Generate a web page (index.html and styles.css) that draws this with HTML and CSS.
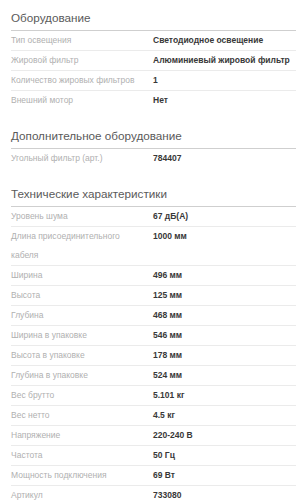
FILE: index.html
```html
<!DOCTYPE html>
<html lang="ru">
<head>
<meta charset="utf-8">
<title>Характеристики</title>
<link rel="stylesheet" href="styles.css">
</head>
<body>
<div class="specs">
  <section class="group">
    <h2 class="group-title">Оборудование</h2>
    <table class="spec-table">
      <tr><th>Тип освещения</th><td>Светодиодное освещение</td></tr>
      <tr><th>Жировой фильтр</th><td>Алюминиевый жировой фильтр</td></tr>
      <tr><th>Количество жировых фильтров</th><td>1</td></tr>
      <tr><th>Внешний мотор</th><td>Нет</td></tr>
    </table>
  </section>
  <section class="group">
    <h2 class="group-title">Дополнительное оборудование</h2>
    <table class="spec-table">
      <tr><th>Угольный фильтр (арт.)</th><td>784407</td></tr>
    </table>
  </section>
  <section class="group">
    <h2 class="group-title">Технические характеристики</h2>
    <table class="spec-table">
      <tr><th>Уровень шума</th><td>67 дБ(А)</td></tr>
      <tr><th>Длина присоединительного кабеля</th><td>1000 мм</td></tr>
      <tr><th>Ширина</th><td>496 мм</td></tr>
      <tr><th>Высота</th><td>125 мм</td></tr>
      <tr><th>Глубина</th><td>468 мм</td></tr>
      <tr><th>Ширина в упаковке</th><td>546 мм</td></tr>
      <tr><th>Высота в упаковке</th><td>178 мм</td></tr>
      <tr><th>Глубина в упаковке</th><td>524 мм</td></tr>
      <tr><th>Вес брутто</th><td>5.101 кг</td></tr>
      <tr><th>Вес нетто</th><td>4.5 кг</td></tr>
      <tr><th>Напряжение</th><td>220-240 В</td></tr>
      <tr><th>Частота</th><td>50 Гц</td></tr>
      <tr><th>Мощность подключения</th><td>69 Вт</td></tr>
      <tr><th>Артикул</th><td>733080</td></tr>
    </table>
  </section>
</div>
</body>
</html>
```

FILE: styles.css
```css
html, body {
  margin: 0;
  padding: 0;
  background: #ffffff;
}

body {
  font-family: "Liberation Sans", Arial, sans-serif;
}

.specs {
  padding: 8px 0 0 11px;
}

.group + .group {
  margin-top: 16px;
}

.group-title {
  margin: 0;
  padding: 0 0 2px 0;
  font-size: 11.7px;
  line-height: 20px;
  font-weight: normal;
  color: #5a5a5a;
  border-bottom: 1px solid #cfcfcf;
}

.spec-table {
  width: 100%;
  border-collapse: collapse;
  font-size: 8.5px;
  line-height: 19px;
}

.spec-table tr + tr th,
.spec-table tr + tr td {
  border-top: 1px solid #ebebeb;
}

.spec-table th {
  width: 131px;
  padding: 0 11px 0 0;
  text-align: left;
  vertical-align: top;
  font-weight: normal;
  color: #b0b0b0;
}

.spec-table td {
  padding: 0;
  vertical-align: top;
  font-weight: bold;
  color: #383838;
}
```
